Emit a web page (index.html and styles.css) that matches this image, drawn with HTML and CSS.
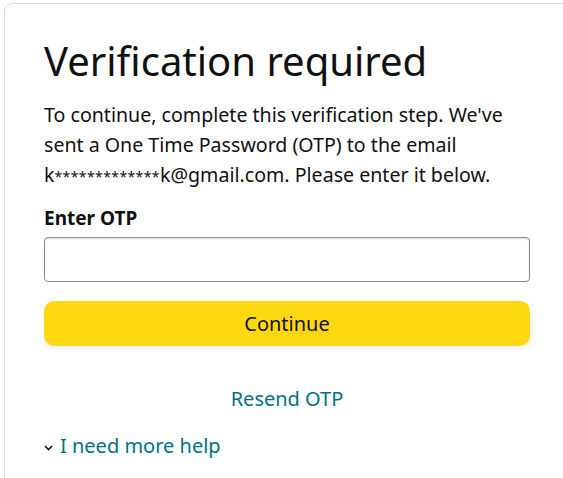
FILE: index.html
```html
<!DOCTYPE html>
<html lang="en">
<head>
  <meta charset="UTF-8" />
  <meta name="viewport" content="width=device-width, initial-scale=1.0" />
  <title>Verification required</title>
  <link rel="stylesheet" href="styles.css">
</head>
<body>
  <div class="card">

    <h1>Verification required</h1>

    <p class="intro">
      To continue, complete this verification step. We've sent a One Time Password (OTP) to the email
      <span class="email">k<span class="stars">*************</span>k@gmail.com.</span> Please enter it below.
    </p>

    <!-- OTP form -->
    <form class="otp-form" onsubmit="return false;">
      <label for="otp" class="label">Enter OTP</label>
      <input type="text" id="otp" class="otp-input" autocomplete="one-time-code"/>
      <button type="submit" class="continue-btn">Continue</button>
    </form>

    <div class="resend">
      <a href="#">Resend OTP</a>
    </div>

    <div class="help">
      <span class="chevron">
        <svg width="9" height="6" viewBox="0 0 9 6"><path d="M1 1l3.5 3.5L8 1" fill="none" stroke="#111" stroke-width="1.6"/></svg>
      </span>
      <a href="#">I need more help</a>
    </div>

  </div>
</body>
</html>
```

FILE: styles.css
```css
html, body {
  margin: 0;
  padding: 0;
  overflow: hidden;
  background-color: #fff;
}
body {
  font-family: "Noto Sans", Arial, sans-serif;
  color: #0f1111;
  padding: 3px 0 0 4px;
}
.card {
  width: 486px;
  padding: 27px 39px 40px;
  border: 1px solid #ddd;
  border-radius: 8px;
}
h1 {
  margin: 0 0 9px;
  font-size: 40px;
  font-weight: 400;
  line-height: 60px;
}
.intro {
  margin: 0;
  font-size: 19.6px;
  line-height: 30px;
}
.stars {
  font-size: 14px;
  letter-spacing: 0.4px;
  line-height: 1;
}
.otp-form {
  margin-top: 15px;
}
.label {
  display: block;
  font-size: 19px;
  font-weight: 700;
  line-height: 26px;
  margin-bottom: 6px;
}
.otp-input {
  display: block;
  box-sizing: border-box;
  width: 100%;
  height: 45px;
  margin: 0;
  border: 1px solid #888c8c;
  border-radius: 4px;
  box-shadow: 0 1px 2px rgba(15, 17, 17, 0.15) inset;
  font-size: 20px;
  padding: 0 10px;
}
.continue-btn {
  display: block;
  width: 100%;
  height: 45px;
  margin-top: 19px;
  background-color: #ffd814;
  border: none;
  border-radius: 10px;
  box-shadow: 0 2px 5px rgba(213, 217, 217, 0.5);
  font-family: inherit;
  font-size: 20px;
  color: #0f1111;
  cursor: pointer;
}
.resend {
  text-align: center;
  margin-top: 38px;
  font-size: 20px;
  line-height: 30px;
}
a {
  color: #007185;
  text-decoration: none;
}
.help {
  margin-top: 17px;
  font-size: 20px;
  line-height: 30px;
  display: flex;
  align-items: center;
  gap: 7px;
}
.chevron {
  display: flex;
  padding-top: 3px;
}
```
